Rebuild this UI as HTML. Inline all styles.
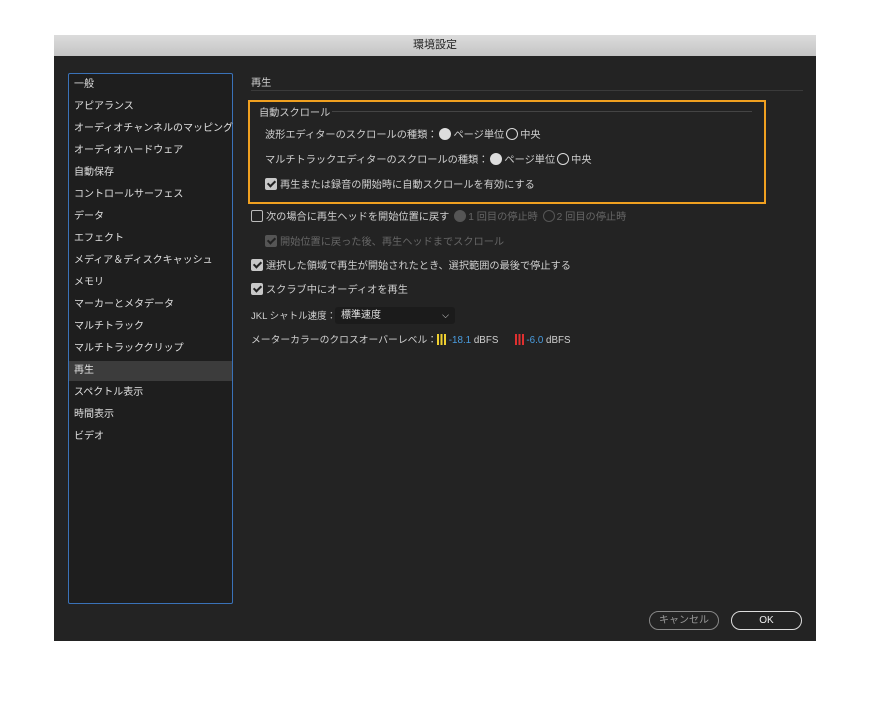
<!DOCTYPE html><html><head><meta charset="utf-8"><style>
body{margin:0;width:872px;height:718px;background:#fff;position:relative;font-family:"Liberation Sans","Noto Sans CJK JP",sans-serif;font-size:10px;color:#d0d0d0;overflow:hidden}
.dlg{position:absolute;left:54px;top:35px;width:762px;height:606px;background:#232323}
.title{position:absolute;left:0;top:0;width:762px;height:21px;background:linear-gradient(#dcdcdc,#c4c4c4);color:#222;text-align:center;line-height:21px;font-size:11px}
.side{position:absolute;left:14px;top:38px;width:163px;height:529px;border:1px solid #3a72b8;border-radius:2px;background:#1e1e1e}
.side div{position:absolute;left:5px;height:20px;line-height:20px;width:158px;color:#e0e0e0;white-space:nowrap;font-size:10px}
.side .sel{background:#3c3c3c;left:0;padding-left:5px}
.t{position:absolute;white-space:nowrap;font-size:10.2px}
.cb{display:inline-block;width:10px;height:10px;border:1px solid #bbb;border-radius:2px;vertical-align:-2px;margin-right:3px;position:relative}
.cb.on{background:#c8c8c8;border-color:#c8c8c8}
.cb.on:after{content:"";position:absolute;left:3px;top:0px;width:3px;height:6px;border:solid #222;border-width:0 2px 2px 0;transform:rotate(45deg)}
.r{display:inline-block;width:10px;height:10px;border-radius:50%;border:1px solid #ddd;vertical-align:-2px;margin:0 2px}
.r.on{background:#ddd}
.dim{color:#666}
.btn{position:absolute;height:17px;border:1.5px solid #888;border-radius:10px;text-align:center;line-height:17px;font-size:10px}
</style></head><body>
<div class="dlg">
<div class="title">環境設定</div>
<div class="side">
<div style="top:1px">一般</div><div style="top:23px">アピアランス</div><div style="top:45px">オーディオチャンネルのマッピング</div><div style="top:67px">オーディオハードウェア</div><div style="top:89px">自動保存</div><div style="top:111px">コントロールサーフェス</div><div style="top:133px">データ</div><div style="top:155px">エフェクト</div><div style="top:177px">メディア＆ディスクキャッシュ</div><div style="top:199px">メモリ</div><div style="top:221px">マーカーとメタデータ</div><div style="top:243px">マルチトラック</div><div style="top:265px">マルチトラッククリップ</div><div class="sel" style="top:287px">再生</div><div style="top:309px">スペクトル表示</div><div style="top:331px">時間表示</div><div style="top:353px">ビデオ</div>
</div>
<div class="t" style="left:197px;top:39px">再生</div>
<div style="position:absolute;left:197px;top:55px;width:552px;height:1px;background:#3a3a3a"></div>
<div style="position:absolute;left:194px;top:65px;width:514px;height:100px;border:2px solid #f0a020"></div>
<div class="t" style="left:205px;top:69px">自動スクロール</div>
<div style="position:absolute;left:278px;top:76px;width:420px;height:1px;background:#444"></div>
<div class="t" style="left:211px;top:91px">波形エディターのスクロールの種類：<span class="r on"></span>ページ単位<span class="r"></span>中央</div>
<div class="t" style="left:211px;top:116px">マルチトラックエディターのスクロールの種類：<span class="r on"></span>ページ単位<span class="r"></span>中央</div>
<div class="t" style="left:211px;top:141px"><span class="cb on"></span>再生または録音の開始時に自動スクロールを有効にする</div>
<div class="t" style="left:197px;top:173px"><span class="cb"></span>次の場合に再生ヘッドを開始位置に戻す <span class="dim"><span class="r" style="background:#555;border-color:#555"></span>1 回目の停止時 <span class="r" style="border-color:#555"></span>2 回目の停止時</span></div>
<div class="t dim" style="left:211px;top:198px"><span class="cb on" style="background:#555;border-color:#555"></span>開始位置に戻った後、再生ヘッドまでスクロール</div>
<div class="t" style="left:197px;top:222px"><span class="cb on"></span>選択した領域で再生が開始されたとき、選択範囲の最後で停止する</div>
<div class="t" style="left:197px;top:246px"><span class="cb on"></span>スクラブ中にオーディオを再生</div>
<div class="t" style="left:197px;top:273px;font-size:9.5px">JKL シャトル速度：</div>
<div style="position:absolute;left:281px;top:272px;width:120px;height:17px;background:#1b1b1b;border-radius:3px;color:#e0e0e0;line-height:17px;text-indent:6px;font-size:10px">標準速度<span style="position:absolute;right:6px;font-size:9px">⌵</span></div>
<div class="t" style="left:197px;top:297px;font-size:9.8px">メーターカラーのクロスオーバーレベル：<span style="display:inline-block;width:9px;height:11px;background:repeating-linear-gradient(90deg,#f0d030 0 2px,#232323 2px 3.5px);vertical-align:-2px"></span> <span style="color:#4a9de0">-18.1</span> dBFS &nbsp;&nbsp;&nbsp;&nbsp; <span style="display:inline-block;width:9px;height:11px;background:repeating-linear-gradient(90deg,#e03030 0 2px,#232323 2px 3.5px);vertical-align:-2px"></span> <span style="color:#4a9de0">-6.0</span> dBFS</div>
<div class="btn" style="left:595px;top:576px;width:68px;color:#999">キャンセル</div>
<div class="btn" style="left:677px;top:576px;width:69px;border-color:#ddd;color:#eee">OK</div>
</div>
</body></html>
